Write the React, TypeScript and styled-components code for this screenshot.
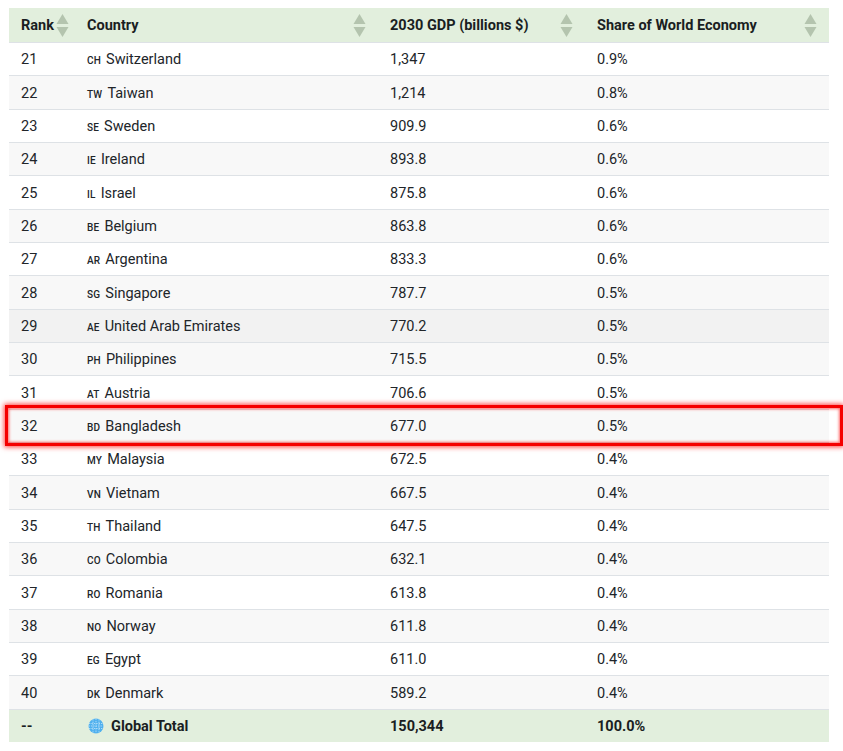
import * as React from "react";
import styled, { createGlobalStyle } from "styled-components";

const GlobalStyle = createGlobalStyle`
  html, body {
    margin: 0;
    padding: 0;
    background: #fff;
  }
`;

const Page = styled.div`
  position: relative;
  width: 843px;
  height: 751px;
  padding: 8px 14px 0 9px;
  box-sizing: border-box;
  overflow: hidden;
  font-family: Roboto, "Liberation Sans", sans-serif;
  font-size: 14.5px;
  color: #212529;
`;

const Table = styled.table`
  width: 820px;
  border-collapse: collapse;
  table-layout: fixed;
`;

const HeadRow = styled.tr`
  height: 34.5px;
  background: #e2efdd;
`;

const HeadCell = styled.th<{ $width: number }>`
  position: relative;
  box-sizing: border-box;
  width: ${(p) => p.$width}px;
  padding: 0 12px;
  text-align: left;
  font-weight: 700;
  color: #1a1e22;
`;

const SortIcon = styled.svg<{ $right: number }>`
  position: absolute;
  right: ${(p) => p.$right}px;
  top: 6px;
  width: 13px;
  height: 23px;
`;

const Row = styled.tr<{ $tone: string }>`
  height: 33.33px;
  background: ${(p) => p.$tone};
  border-top: 1px solid #dee2e6;
`;

const Cell = styled.td`
  padding: 1.4px 12px 0;
`;

const Code = styled.span`
  font-size: 10px;
  font-weight: 500;
  margin-right: 5px;
  letter-spacing: 0.2px;
`;

const FootRow = styled.tr`
  height: 33.33px;
  background: #e2efdd;
  border-top: 1px solid #dee2e6;
`;

const FootCell = styled.td`
  padding: 1.4px 12px 0;
  font-weight: 700;
  color: #1a1e22;
`;

const Globe = styled.svg`
  width: 16px;
  height: 16px;
  margin: 0 7px 0 1px;
  vertical-align: -3px;
`;

const Highlight = styled.div`
  position: absolute;
  left: 5px;
  top: 405px;
  width: 838px;
  height: 41px;
  box-sizing: border-box;
  border: 3px solid #f50000;
  box-shadow: 0 0 5px 1px rgba(255, 0, 0, 0.75), inset 0 0 3px 1px rgba(255, 0, 0, 0.6);
  pointer-events: none;
`;

const rows = [
  [21, "CH", "Switzerland", "1,347", "0.9%"],
  [22, "TW", "Taiwan", "1,214", "0.8%"],
  [23, "SE", "Sweden", "909.9", "0.6%"],
  [24, "IE", "Ireland", "893.8", "0.6%"],
  [25, "IL", "Israel", "875.8", "0.6%"],
  [26, "BE", "Belgium", "863.8", "0.6%"],
  [27, "AR", "Argentina", "833.3", "0.6%"],
  [28, "SG", "Singapore", "787.7", "0.5%"],
  [29, "AE", "United Arab Emirates", "770.2", "0.5%"],
  [30, "PH", "Philippines", "715.5", "0.5%"],
  [31, "AT", "Austria", "706.6", "0.5%"],
  [32, "BD", "Bangladesh", "677.0", "0.5%"],
  [33, "MY", "Malaysia", "672.5", "0.4%"],
  [34, "VN", "Vietnam", "667.5", "0.4%"],
  [35, "TH", "Thailand", "647.5", "0.4%"],
  [36, "CO", "Colombia", "632.1", "0.4%"],
  [37, "RO", "Romania", "613.8", "0.4%"],
  [38, "NO", "Norway", "611.8", "0.4%"],
  [39, "EG", "Egypt", "611.0", "0.4%"],
  [40, "DK", "Denmark", "589.2", "0.4%"],
] as const;

const columns = [
  { label: "Rank", width: 66, iconRight: 6 },
  { label: "Country", width: 303, iconRight: 12 },
  { label: "2030 GDP (billions $)", width: 207, iconRight: 12 },
  { label: "Share of World Economy", width: 244, iconRight: 12 },
];

// row 29 sits under the pointer in the picture, so it is a shade darker
const rowTone = (rank: number, i: number) => {
  if (rank === 29) return "#f2f2f2";
  return i % 2 === 1 ? "#f8f8f8" : "#fff";
};

export default function App() {
  return (
    <Page>
      <GlobalStyle />
      <Table>
        <thead>
          <HeadRow>
            {columns.map((c) => (
              <HeadCell key={c.label} $width={c.width}>
                {c.label}
                <SortIcon $right={c.iconRight} viewBox="0 0 13 23">
                  <path d="M6.5 0 L12.5 10 H0.5 Z" fill="#b4c4ae" />
                  <path d="M0.5 13 H12.5 L6.5 23 Z" fill="#b4c4ae" />
                </SortIcon>
              </HeadCell>
            ))}
          </HeadRow>
        </thead>
        <tbody>
          {rows.map(([rank, code, name, gdp, share], i) => (
            <Row key={rank} $tone={rowTone(rank, i)}>
              <Cell>{rank}</Cell>
              <Cell>
                <Code>{code}</Code>
                {name}
              </Cell>
              <Cell>{gdp}</Cell>
              <Cell>{share}</Cell>
            </Row>
          ))}
          <FootRow>
            <FootCell>--</FootCell>
            <FootCell>
              <Globe viewBox="0 0 16 16">
                <circle cx="8" cy="8" r="7.5" fill="#4fb0ee" />
                <path
                  d="M1 5.5H15M0.5 8H15.5M1 10.5H15M8 0.5V15.5M5 1.2V14.8M11 1.2V14.8"
                  stroke="#c4e6fa"
                  strokeWidth="0.8"
                  strokeDasharray="1.4 1"
                  fill="none"
                />
              </Globe>
              Global Total
            </FootCell>
            <FootCell>150,344</FootCell>
            <FootCell>100.0%</FootCell>
          </FootRow>
        </tbody>
      </Table>
      <Highlight />
    </Page>
  );
}
